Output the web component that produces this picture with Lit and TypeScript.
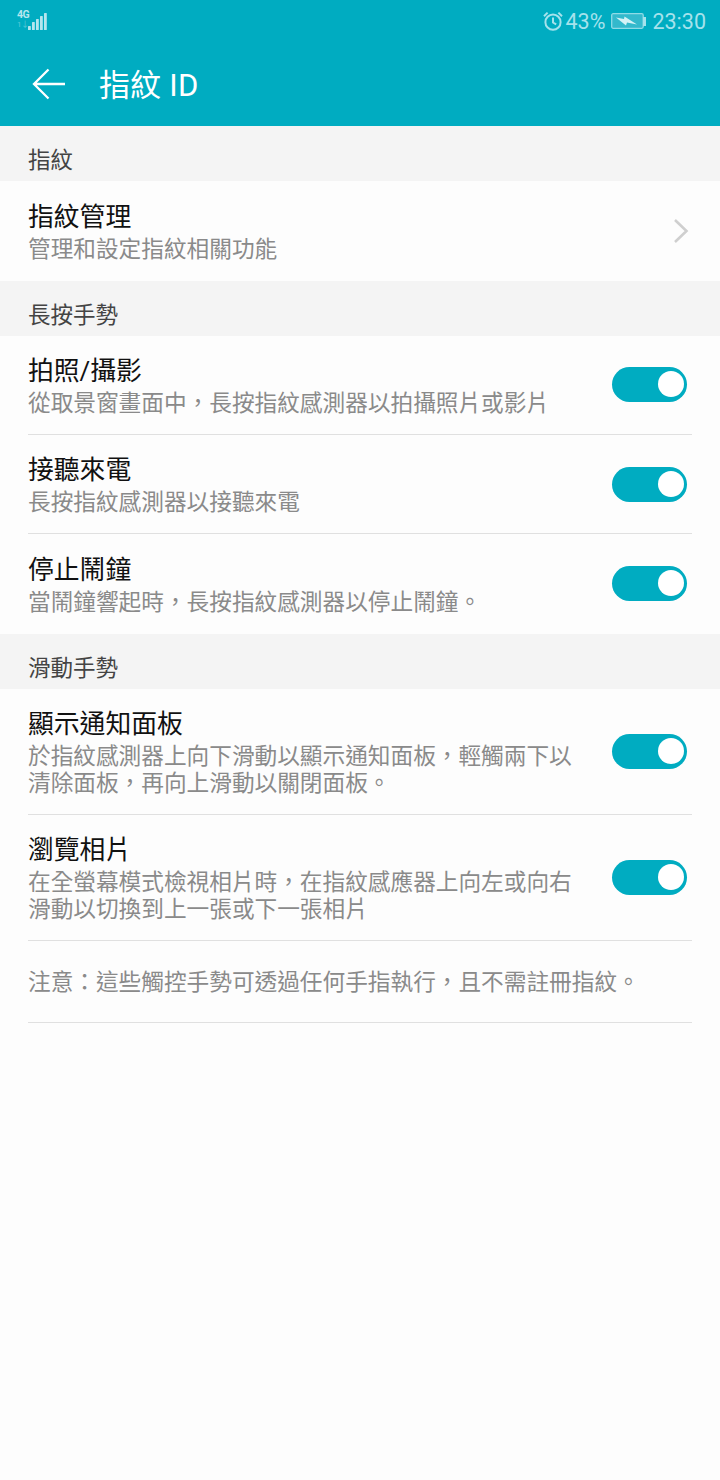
import { html, css, LitElement, svg } from 'lit'
import { customElement } from 'lit/decorators.js'

type Row = { title: string; sub: string[]; h: number; chevron?: boolean; last?: boolean; low?: boolean }

const fingerprint: Row[] = [
  { title: '指紋管理', sub: ['管理和設定指紋相關功能'], h: 100, chevron: true, last: true },
]
const longPress: Row[] = [
  { title: '拍照/攝影', sub: ['從取景窗畫面中，長按指紋感測器以拍攝照片或影片'], h: 99 },
  { title: '接聽來電', sub: ['長按指紋感測器以接聽來電'], h: 99, low: true },
  { title: '停止鬧鐘', sub: ['當鬧鐘響起時，長按指紋感測器以停止鬧鐘。'], h: 100, last: true },
]
const swipe: Row[] = [
  { title: '顯示通知面板', sub: ['於指紋感測器上向下滑動以顯示通知面板，輕觸兩下以', '清除面板，再向上滑動以關閉面板。'], h: 126 },
  { title: '瀏覽相片', sub: ['在全螢幕模式檢視相片時，在指紋感應器上向左或向右', '滑動以切換到上一張或下一張相片'], h: 126 },
]

@customElement('app-root')
export class AppRoot extends LitElement {
  renderStatus() {
    const bars = [4, 8, 11, 14, 17]
    return html`
      <div class="status">
        <div class="signal">
          <div class="net"><span>4G</span><span class="dim">1↓</span></div>
          <svg width="20" height="20" viewBox="0 0 20 20">
            ${bars.map((b, i) => svg`<rect x=${i * 4} y=${20 - b} width="2.8" height=${b} rx="0.6" fill="#b5e6ee" />`)}
          </svg>
        </div>
        <div class="right">
          <svg width="20" height="20" viewBox="0 0 20 20" fill="none" stroke="#a5e2ec" stroke-width="2">
            <circle cx="10" cy="11.2" r="7.6" />
            <path d="M10 6.5V11.5L13.2 13.4M1 5.2 4.6 1.6M19 5.2 15.4 1.6" />
          </svg>
          <span class="pct">43%</span>
          <svg width="33" height="16" viewBox="0 0 33 16">
            <rect x="0.7" y="0.7" width="31.5" height="14.6" rx="1.5" fill="#33b9cc" stroke="#8fdbe6" stroke-width="1.3" />
            <path d="M5 4.5 13 6 13.5 3.5 26 11.5 16 9.5 15 12.5Z" fill="#d5f2f6" />
          </svg>
          <span class="nub"></span>
          <span class="time">23:30</span>
        </div>
      </div>
    `
  }

  renderRow(r: Row) {
    return html`
      <div class="row" style="height:${r.h}px">
        <div class="texts ${r.last ? 'last' : ''}">
          <div class="body">
            <div class="title">${r.title}</div>
            ${r.sub.map((s) => html`<div class="sub">${s}</div>`)}
          </div>
          ${r.chevron
            ? html`<svg class="chev" width="16" height="26" viewBox="0 0 16 26" fill="none" stroke="#cfcfcf" stroke-width="2.6">
                <path d="M2 2 13.5 13 2 24" />
              </svg>`
            : html`<div class="switch ${r.low ? 'low' : ''}"><span class="knob"></span></div>`}
        </div>
      </div>
    `
  }

  render() {
    return html`
      <header>
        ${this.renderStatus()}
        <div class="bar">
          <svg width="34" height="32" viewBox="0 0 34 32" fill="none" stroke="#fff" stroke-width="2.3">
            <path d="M16.5 1.5 2 16 16.5 30.5M2 16H33" />
          </svg>
          <span class="page-title">指紋 ID</span>
        </div>
      </header>
      <div class="section">指紋</div>
      ${fingerprint.map((r) => this.renderRow(r))}
      <div class="section">長按手勢</div>
      ${longPress.map((r) => this.renderRow(r))}
      <div class="section">滑動手勢</div>
      ${swipe.map((r) => this.renderRow(r))}
      <div class="note">注意：這些觸控手勢可透過任何手指執行，且不需註冊指紋。</div>
    `
  }

  static styles = css`
    :host {
      display: block;
      width: 720px;
      height: 1480px;
      overflow: hidden;
      background: #fdfdfd;
      font-family: 'Roboto', 'Noto Sans CJK TC', sans-serif;
    }

    header {
      height: 126px;
      background: #00acc1;
      color: #fff;
    }

    .status {
      height: 42px;
      padding: 0 14px 0 17px;
      display: flex;
      align-items: center;
      justify-content: space-between;
    }

    .signal {
      display: flex;
      align-items: flex-end;
      margin-top: -2px;
    }

    .net {
      display: flex;
      flex-direction: column;
      font-size: 10.5px;
      line-height: 10px;
      font-weight: 700;
      letter-spacing: -0.4px;
      color: #b5e6ee;
      width: 11px;
    }

    .dim {
      opacity: 0.5;
      font-size: 8px;
      font-weight: 400;
    }

    .right {
      display: flex;
      align-items: center;
      color: #a5e2ec;
      font-size: 21.5px;
    }

    .pct {
      margin: 0 6px 0 3px;
    }

    .nub {
      width: 3px;
      height: 9px;
      background: #a5e2ec;
      margin: 0 6px 0 -1px;
    }

    .bar {
      height: 84px;
      padding-left: 32px;
      display: flex;
      align-items: center;
    }

    .page-title {
      margin-left: 33px;
      margin-bottom: 4px;
      font-size: 31px;
      letter-spacing: 0.2px;
    }

    .section {
      height: 55px;
      box-sizing: border-box;
      padding: 19px 0 0 28px;
      background: #f4f4f4;
      color: #444;
      font-size: 22.5px;
      line-height: 30px;
    }

    .row {
      padding: 0 28px;
      background: #fdfdfd;
    }

    .texts {
      height: 100%;
      box-sizing: border-box;
      display: flex;
      align-items: center;
      justify-content: space-between;
      border-bottom: 1px solid #e0e0e0;
    }

    .texts.last {
      border-bottom: none;
    }

    .body {
      padding-top: 1px;
    }

    .title {
      color: #111;
      font-size: 25.8px;
      line-height: 34px;
      margin-bottom: 2px;
    }

    .sub {
      color: #8a8a8a;
      font-size: 22.67px;
      line-height: 27px;
      white-space: nowrap;
    }

    .chev {
      margin-right: 3px;
    }

    .switch {
      width: 75px;
      height: 35px;
      margin: 0 5px 1px 0;
      border-radius: 18px;
      background: #00acc1;
      position: relative;
    }

    .switch.low {
      margin: 1px 5px 0 0;
    }

    .knob {
      position: absolute;
      right: 3px;
      top: 4px;
      width: 26px;
      height: 26px;
      border-radius: 50%;
      background: #fff;
    }

    .note {
      margin: 0 28px;
      height: 82px;
      box-sizing: border-box;
      padding-top: 27px;
      border-bottom: 1px solid #e0e0e0;
      color: #8a8a8a;
      font-size: 22.67px;
      line-height: 30px;
    }
  `
}

declare global {
  interface HTMLElementTagNameMap {
    'app-root': AppRoot
  }
}
